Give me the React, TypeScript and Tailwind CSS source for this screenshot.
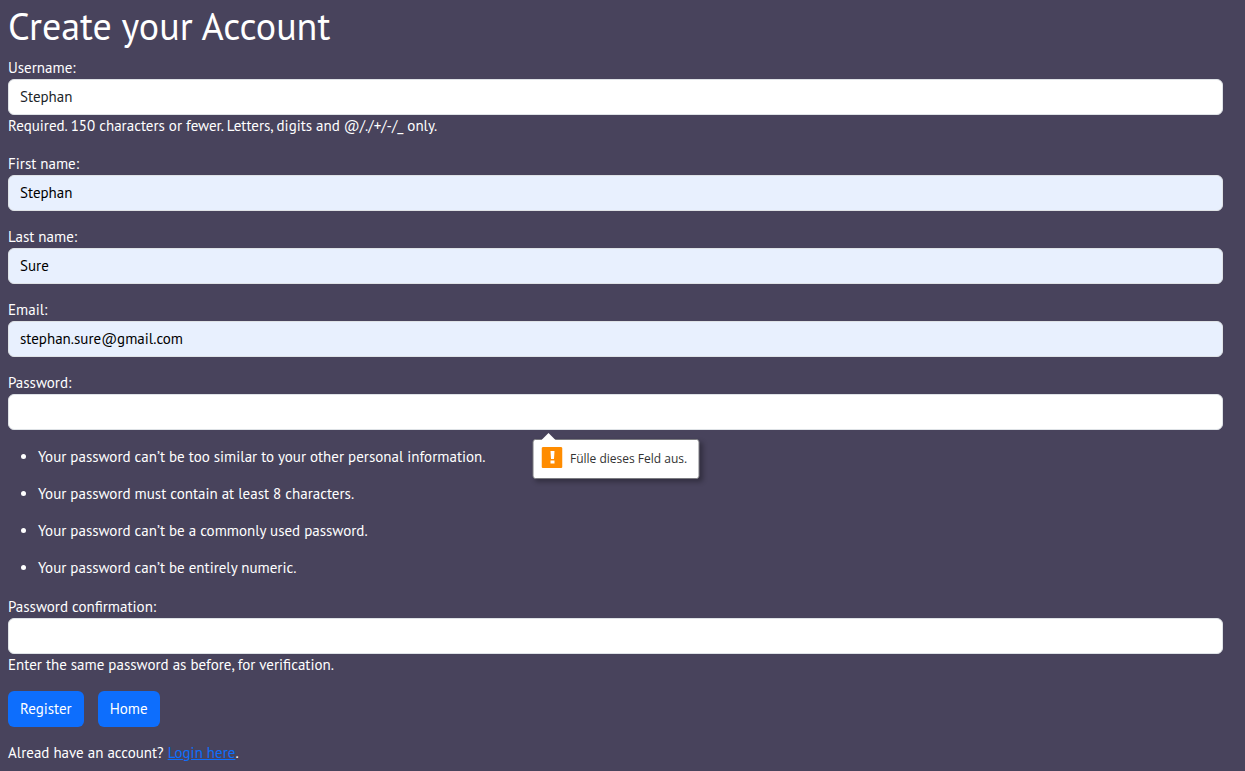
import type { ReactNode } from "react";

type FieldProps = {
  id: string;
  label: string;
  type?: string;
  value?: string;
  autofilled?: boolean;
  autoComplete?: string;
  help?: string;
  children?: ReactNode;
};

function Field({ id, label, type = "text", value, autofilled, autoComplete, help, children }: FieldProps) {
  return (
    <div className="flex flex-col">
      <label htmlFor={id} className="self-start">
        {label}
      </label>
      <div className="relative">
        <input
          id={id}
          name={id}
          type={type}
          defaultValue={value}
          autoComplete={autoComplete}
          className={
            autofilled
              ? "block h-9 w-full rounded-md border border-[#dee2e6] bg-[#e8f0fe] px-[11px] pb-0.5 text-black outline-none"
              : "block h-9 w-full rounded-md border border-[#dee2e6] bg-white px-[11px] pb-0.5 text-[#212529] outline-none"
          }
        />
        {children}
      </div>
      {help && <p className="pb-px">{help}</p>}
    </div>
  );
}

function ValidationBubble({ message }: { message: string }) {
  return (
    <div
      role="alert"
      className="absolute top-full left-1/2 mt-[9px] flex h-10 w-[167px] -translate-x-1/2 items-center gap-2 rounded-[3px] border border-[#7b7b80] bg-white pl-2 font-['Open_Sans',sans-serif] text-xs whitespace-nowrap text-[#333] shadow-[3px_3px_5px_rgba(0,0,0,0.3)]"
    >
      <svg className="absolute -top-2 left-2 h-2 w-4" viewBox="0 0 16 8" aria-hidden="true">
        <path d="M0 8 7 1 14 8Z" fill="#fff" />
      </svg>
      <svg className="mb-1 size-[21px] shrink-0" viewBox="0 0 21 21" aria-hidden="true">
        <rect width="21" height="21" rx="1.5" fill="#ff8c00" />
        <path d="M9 4h4l-.5 8h-3zM9 13.5h4v3H9z" fill="#fff" />
      </svg>
      <span>{message}</span>
    </div>
  );
}

const passwordRules = [
  "Your password can’t be too similar to your other personal information.",
  "Your password must contain at least 8 characters.",
  "Your password can’t be a commonly used password.",
  "Your password can’t be entirely numeric.",
];

export default function App() {
  return (
    <main className="min-h-screen bg-[#48435c] pr-[22px] pl-2 font-['PT_Sans','Noto_Sans',sans-serif] text-[15px] leading-[22px] text-white">
      <h1 className="pt-0.5 pb-[7px] text-[38px] leading-[48px]">Create your Account</h1>
      <form noValidate>
        <div className="flex flex-col gap-[15px]">
          <Field
            id="username"
            label="Username:"
            value="Stephan"
            autoComplete="username"
            help="Required. 150 characters or fewer. Letters, digits and @/./+/-/_ only."
          />
          <Field id="first_name" label="First name:" value="Stephan" autofilled autoComplete="given-name" />
          <Field id="last_name" label="Last name:" value="Sure" autofilled autoComplete="family-name" />
          <Field id="email" label="Email:" type="email" value="stephan.sure@gmail.com" autofilled autoComplete="email" />
          <Field id="password1" label="Password:" type="password" autoComplete="new-password">
            <ValidationBubble message="Fülle dieses Feld aus." />
          </Field>
        </div>
        <ul className="mt-4 mb-[17px] flex list-disc flex-col gap-[15px] pl-[30px]">
          {passwordRules.map((rule) => (
            <li key={rule}>{rule}</li>
          ))}
        </ul>
        <Field
          id="password2"
          label="Password confirmation:"
          type="password"
          autoComplete="new-password"
          help="Enter the same password as before, for verification."
        />
        <div className="mt-3.5 mb-[15px] flex gap-3.5">
          <button type="submit" className="h-9 rounded-md bg-[#0d6efd] px-3">
            Register
          </button>
          <a href="#home" className="flex h-9 items-center rounded-md bg-[#0d6efd] px-3">
            Home
          </a>
        </div>
      </form>
      <p>
        Alread have an account?{" "}
        <a href="#login" className="text-[#0d6efd] underline">
          Login here
        </a>
        .
      </p>
    </main>
  );
}
